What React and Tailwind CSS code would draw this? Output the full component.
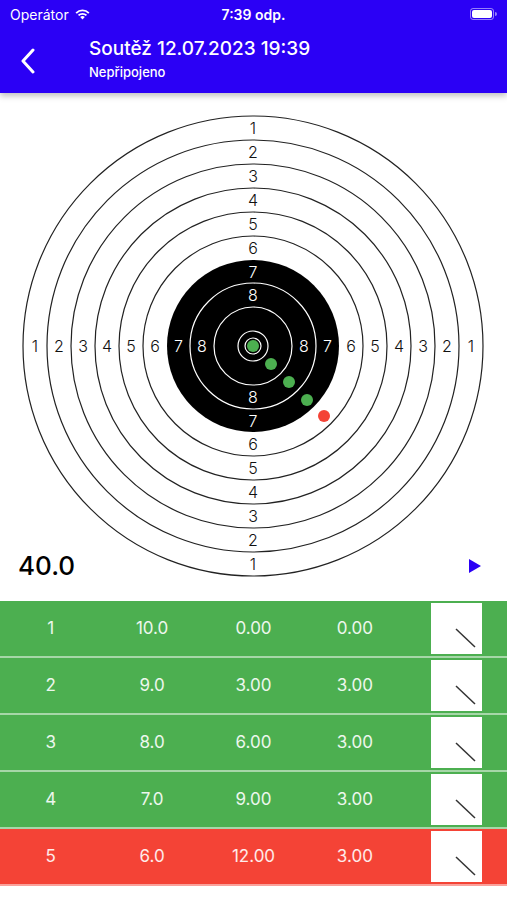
import React from 'react'

const inter = { fontFamily: 'Inter, "Liberation Sans", sans-serif' }

const rows = [
  { n: 1, score: '10.0', a: '0.00', b: '0.00', miss: false },
  { n: 2, score: '9.0', a: '3.00', b: '3.00', miss: false },
  { n: 3, score: '8.0', a: '6.00', b: '3.00', miss: false },
  { n: 4, score: '7.0', a: '9.00', b: '3.00', miss: false },
  { n: 5, score: '6.0', a: '12.00', b: '3.00', miss: true },
]

const shots = [
  { x: 253, y: 253, c: '#4caf50' },
  { x: 271, y: 271, c: '#4caf50' },
  { x: 289, y: 289, c: '#4caf50' },
  { x: 307, y: 307, c: '#4caf50' },
  { x: 324, y: 323, c: '#f44336' },
]

function StatusBar() {
  return (
    <div className="relative flex h-[28px] items-center px-[10px] text-white text-[14px]" style={inter}>
      <div className="flex items-center gap-[5px]">
        <span>Operátor</span>
        <svg width="17" height="12" viewBox="0 0 17 12">
          <path d="M8.5 11.5 L6.2 9.1 A3.3 3.3 0 0 1 10.8 9.1 Z" fill="white" />
          <path d="M3.9 6.8 A6.5 6.5 0 0 1 13.1 6.8 L11.8 8.1 A4.7 4.7 0 0 0 5.2 8.1 Z" fill="white" />
          <path d="M1.5 4.4 A9.9 9.9 0 0 1 15.5 4.4 L14.2 5.7 A8.1 8.1 0 0 0 2.8 5.7 Z" fill="white" />
        </svg>
      </div>
      <div className="absolute inset-x-0 top-0 flex h-[28px] items-center justify-center font-semibold">7:39 odp.</div>
      <div className="ml-auto flex items-center gap-[1px]">
        <div className="h-[12px] w-[24px] rounded-[3px] border border-white/50 p-[1px]">
          <div className="h-full w-full rounded-[2px] bg-white" />
        </div>
        <div className="h-[4px] w-[2px] rounded-r-sm bg-white/50" />
      </div>
    </div>
  )
}

function Header() {
  return (
    <div className="relative z-10 bg-[#2b00f5] shadow-[0_3px_6px_rgba(0,0,0,0.25)]">
      <StatusBar />
      <div className="flex h-[65px] items-center" style={inter}>
        <div className="flex w-[89px] items-center pl-[20px]">
          <svg width="16" height="26" viewBox="0 0 16 26">
            <path d="M13 2 L3 13 L13 24" fill="none" stroke="white" strokeWidth="3" strokeLinecap="round" strokeLinejoin="round" />
          </svg>
        </div>
        <div className="flex flex-col pb-[4px] text-white">
          <span className="text-[19px] font-medium leading-[26px]">Soutěž 12.07.2023 19:39</span>
          <span className="text-[13px] font-medium leading-[20px]">Nepřipojeno</span>
        </div>
      </div>
    </div>
  )
}

function Target() {
  const cx = 253
  const cy = 253
  const radii = [230, 206, 182, 158, 134, 110, 86, 63, 39, 15]
  const labels = []
  for (let i = 0; i < 8; i++) {
    const r = (radii[i] + radii[i + 1]) / 2
    const fill = i >= 6 ? 'white' : '#111'
    const n = i + 1
    labels.push(
      <text key={'t' + n} x={cx} y={cy - r + 6} fill={fill} fontSize="16" fontWeight="300" textAnchor="middle">{n}</text>,
      <text key={'b' + n} x={cx} y={cy + r + 6} fill={fill} fontSize="16" fontWeight="300" textAnchor="middle">{n}</text>,
      <text key={'l' + n} x={cx - r} y={cy + 6} fill={fill} fontSize="16" fontWeight="300" textAnchor="middle">{n}</text>,
      <text key={'r' + n} x={cx + r} y={cy + 6} fill={fill} fontSize="16" fontWeight="300" textAnchor="middle">{n}</text>
    )
  }
  return (
    <svg width="507" height="508" viewBox="0 0 507 508" style={inter}>
      {radii.slice(0, 6).map((r) => (
        <circle key={r} cx={cx} cy={cy} r={r} fill="white" stroke="#222" strokeWidth="1.2" />
      ))}
      <circle cx={cx} cy={cy} r={radii[6]} fill="black" />
      {radii.slice(7).map((r) => (
        <circle key={r} cx={cx} cy={cy} r={r} fill="none" stroke="white" strokeWidth="1.2" />
      ))}
      <circle cx={cx} cy={cy} r="8" fill="none" stroke="white" strokeWidth="1.2" />
      {labels}
      {shots.map((s, i) => (
        <circle key={i} cx={s.x} cy={s.y} r="6" fill={s.c} />
      ))}
    </svg>
  )
}

export default function App() {
  return (
    <div className="h-[900px] w-[507px] overflow-hidden bg-white">
      <Header />
      <div className="relative h-[508px]">
        <Target />
        <div className="absolute left-0 right-0 top-[455px] flex items-center justify-between pl-[18px] pr-[25px]">
          <span className="text-[26px] font-medium leading-[36px] text-black" style={inter}>40.0</span>
          <svg width="14" height="16" viewBox="0 0 14 16">
            <path d="M1 1 L13 8 L1 15 Z" fill="#2b00f5" />
          </svg>
        </div>
      </div>
      <div className="flex flex-col" style={inter}>
        {rows.map((r) => (
          <div
            key={r.n}
            className={
              'grid h-[57px] grid-cols-5 items-center border-b-2 border-white/50 text-[17px] text-white/90 ' +
              (r.miss ? 'bg-[#f44336]' : 'bg-[#4caf50]')
            }
          >
            <span className="text-center">{r.n}</span>
            <span className="text-center">{r.score}</span>
            <span className="text-center">{r.a}</span>
            <span className="text-center">{r.b}</span>
            <div className="flex justify-center">
              <div className="h-[51px] w-[51px] bg-white">
                <svg width="51" height="51" viewBox="0 0 51 51">
                  <line x1="25" y1="26" x2="44" y2="44" stroke="#333" strokeWidth="1.5" />
                </svg>
              </div>
            </div>
          </div>
        ))}
      </div>
    </div>
  )
}
